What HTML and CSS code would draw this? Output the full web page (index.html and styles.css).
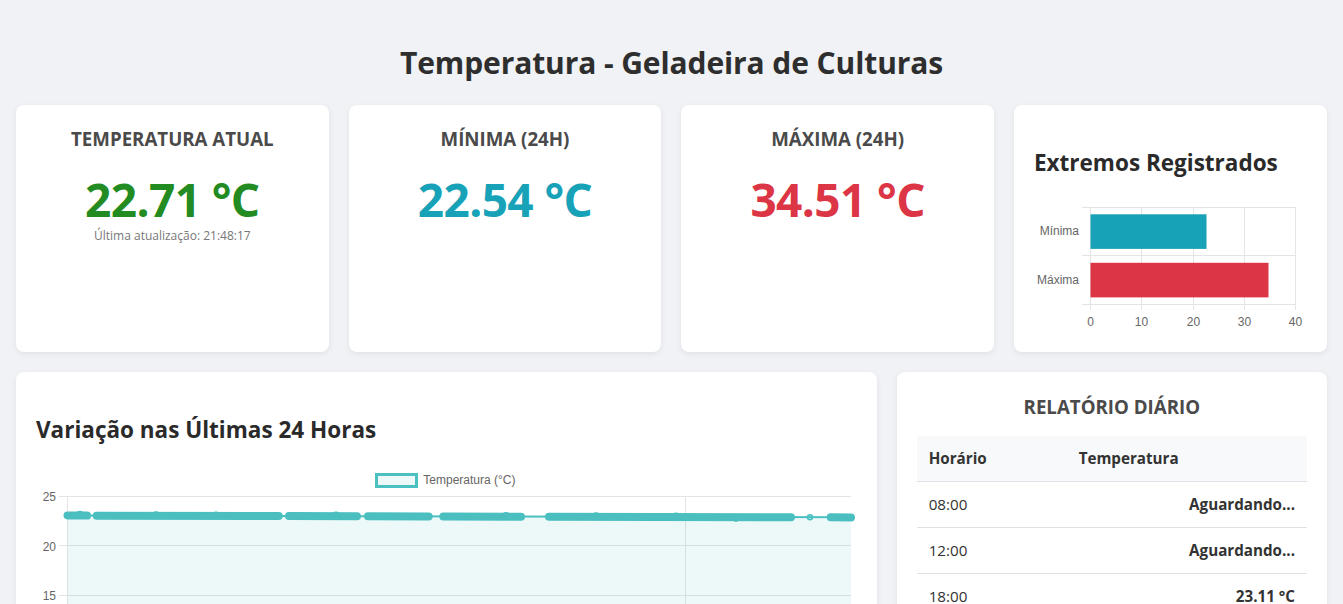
FILE: index.html
```html
<!DOCTYPE html>
<html lang="pt-BR">
<head>
<meta charset="utf-8">
<title>Temperatura - Geladeira de Culturas</title>
<link rel="stylesheet" href="styles.css">
</head>
<body>
<div class="page">
  <h1 class="title">Temperatura - Geladeira de Culturas</h1>

  <div class="top-grid">
    <div class="card stat">
      <h3 class="card-label">TEMPERATURA ATUAL</h3>
      <div class="stat-value green">22.71 °C</div>
      <div class="stat-note">Última atualização: 21:48:17</div>
    </div>
    <div class="card stat">
      <h3 class="card-label">MÍNIMA (24H)</h3>
      <div class="stat-value cyan">22.54 °C</div>
    </div>
    <div class="card stat">
      <h3 class="card-label">MÁXIMA (24H)</h3>
      <div class="stat-value red">34.51 °C</div>
    </div>
    <div class="card">
      <h2 class="card-title">Extremos Registrados</h2>
      <svg class="bar-chart" width="273" height="137" viewBox="0 0 273 137">
        <g class="grid">
          <line x1="56.5" y1="12" x2="56.5" y2="115"/>
          <line x1="107.5" y1="12" x2="107.5" y2="115"/>
          <line x1="159.5" y1="12" x2="159.5" y2="115"/>
          <line x1="210.5" y1="12" x2="210.5" y2="115"/>
          <line x1="261.5" y1="12" x2="261.5" y2="115"/>
          <line x1="48" y1="12.5" x2="262" y2="12.5"/>
          <line x1="48" y1="60.5" x2="262" y2="60.5"/>
          <line x1="48" y1="109.5" x2="262" y2="109.5"/>
        </g>
        <rect x="56.5" y="19.3" width="116" height="34.6" fill="#17a2b8"/>
        <rect x="56.5" y="67.8" width="178" height="34.6" fill="#dc3545"/>
        <g class="axis-text">
          <text x="45" y="40" text-anchor="end">Mínima</text>
          <text x="45" y="89.3" text-anchor="end">Máxima</text>
          <text x="56.5" y="130.7" text-anchor="middle">0</text>
          <text x="107.5" y="130.7" text-anchor="middle">10</text>
          <text x="159.5" y="130.7" text-anchor="middle">20</text>
          <text x="210.5" y="130.7" text-anchor="middle">30</text>
          <text x="261.5" y="130.7" text-anchor="middle">40</text>
        </g>
      </svg>
    </div>
  </div>

  <div class="bottom-grid">
    <div class="card">
      <h2 class="card-title">Variação nas Últimas 24 Horas</h2>
      <svg class="line-chart" width="820" height="300" viewBox="0 0 820 300">
        <rect x="340.5" y="12.5" width="40" height="12" fill="rgba(75,192,192,0.1)" stroke="#4bc0c0" stroke-width="3"/>
        <text class="axis-text" x="387.3" y="21.5">Temperatura (°C)</text>
        <g class="grid">
          <line x1="23" y1="34.5" x2="815" y2="34.5"/>
          <line x1="23" y1="83.5" x2="815" y2="83.5"/>
          <line x1="23" y1="133.5" x2="815" y2="133.5"/>
          <line x1="23" y1="182.5" x2="815" y2="182.5"/>
          <line x1="23" y1="231.5" x2="815" y2="231.5"/>
          <line x1="31.5" y1="34" x2="31.5" y2="300"/>
          <line x1="649.5" y1="34" x2="649.5" y2="300"/>
        </g>
        <g class="axis-text" text-anchor="end">
          <text x="20" y="38.5">25</text>
          <text x="20" y="88.5">20</text>
          <text x="20" y="138">15</text>
          <text x="20" y="187.5">10</text>
        </g>
        <polygon points="31.5,53.5 815,55.5 815,300 31.5,300" fill="rgba(75,192,192,0.1)"/>
        <line class="data-thin" x1="31.5" y1="53.5" x2="815" y2="55.3"/>
        <g class="data-dense">
          <line x1="31.5" y1="53.4" x2="51" y2="53.6"/>
          <line x1="60.7" y1="53.7" x2="242.7" y2="54.0"/>
          <line x1="253" y1="54.1" x2="321" y2="54.3"/>
          <line x1="332" y1="54.3" x2="392.7" y2="54.5"/>
          <line x1="407.3" y1="54.5" x2="485" y2="54.7"/>
          <line x1="513" y1="54.7" x2="755" y2="55.2"/>
          <line x1="794.7" y1="55.3" x2="815" y2="55.4"/>
        </g>
        <g class="data-bumps">
          <circle cx="44" cy="52.8" r="4"/>
          <circle cx="120" cy="53.2" r="4"/>
          <circle cx="180" cy="53.4" r="4"/>
          <circle cx="300" cy="53.6" r="4"/>
          <circle cx="470" cy="54.0" r="4"/>
          <circle cx="560" cy="54.2" r="4"/>
          <circle cx="640" cy="54.4" r="4"/>
          <circle cx="700" cy="55.8" r="4"/>
        </g>
        <circle class="data-point" cx="774" cy="55.3" r="2.5"/>
      </svg>
    </div>
    <div class="card">
      <h3 class="card-label report-label">RELATÓRIO DIÁRIO</h3>
      <table class="report">
        <colgroup><col class="col-time"><col></colgroup>
        <thead>
          <tr><th>Horário</th><th>Temperatura</th></tr>
        </thead>
        <tbody>
          <tr><td>08:00</td><td class="val">Aguardando...</td></tr>
          <tr><td>12:00</td><td class="val">Aguardando...</td></tr>
          <tr><td>18:00</td><td class="val">23.11 °C</td></tr>
        </tbody>
      </table>
    </div>
  </div>
</div>
</body>
</html>
```

FILE: styles.css
```css
* { box-sizing: border-box; }

html, body {
  margin: 0;
  padding: 0;
  background: #f0f2f5;
}

body {
  font-family: "Open Sans", "Noto Sans", sans-serif;
  color: #333;
}

.page {
  padding: 16px 16px 0;
}

.title {
  margin: 27px 0 22px;
  font-size: 30px;
  line-height: 40px;
  letter-spacing: -0.1px;
  font-weight: 700;
  text-align: center;
  color: #2e2e2e;
}

.top-grid {
  display: grid;
  grid-template-columns: repeat(4, 1fr);
  gap: 20px;
  margin-bottom: 20px;
}

.bottom-grid {
  display: grid;
  grid-template-columns: 2fr 1fr;
  gap: 20px;
}

.card {
  background: #fff;
  border-radius: 8px;
  padding: 20px;
  box-shadow: 0 2px 6px rgba(0, 0, 0, 0.07);
}

.stat {
  text-align: center;
}

.card-label {
  margin: 0;
  font-size: 18.7px;
  line-height: 28px;
  font-weight: 700;
  color: #4a4a4a;
  text-align: center;
}

.report-label {
  margin-bottom: 15px;
  line-height: 29px;
}

.stat-value {
  margin-top: 17px;
  font-size: 46px;
  line-height: 58px;
  letter-spacing: -0.6px;
  font-weight: 700;
}

.green { color: #228b22; }
.cyan { color: #17a2b8; }
.red { color: #dc3545; }

.stat-note {
  font-size: 12px;
  line-height: 16px;
  color: #777;
}

.card-title {
  margin: 23px 0 17px;
  font-size: 22.5px;
  line-height: 30px;
  font-weight: 700;
  color: #2a2a2a;
}

.bar-chart,
.line-chart {
  display: block;
  overflow: visible;
}

.grid line {
  stroke: #e4e4e4;
  stroke-width: 1;
}

.axis-text,
.axis-text text {
  font-family: "Liberation Sans", Arial, sans-serif;
  font-size: 12px;
  fill: #666;
}

.data-thin {
  stroke: #4bc0c0;
  stroke-width: 2;
}

.data-dense line {
  stroke: #4bbfbf;
  stroke-width: 8;
  stroke-linecap: round;
}

.data-bumps circle {
  fill: #4bbfbf;
}

.data-point {
  fill: rgba(75, 192, 192, 0.3);
  stroke: #4bc0c0;
  stroke-width: 1.5;
}

.report {
  width: 100%;
  border-collapse: collapse;
  table-layout: fixed;
  font-size: 15.2px;
}

.col-time { width: 150px; }

.report th,
.report td {
  padding: 12px;
  line-height: 21px;
  text-align: left;
  border-bottom: 1px solid #dee2e6;
}

.report th {
  background: #f8f9fa;
  font-weight: 700;
  color: #333;
}

.report td {
  color: #333;
}

.report td.val {
  text-align: right;
  font-weight: 700;
}
```
